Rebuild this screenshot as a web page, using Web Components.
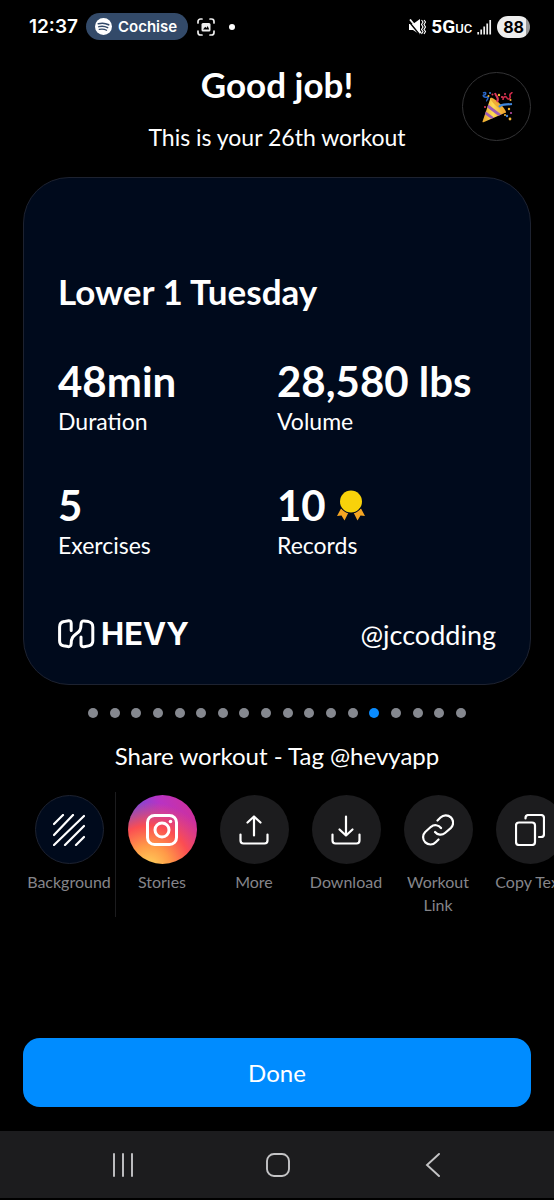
<!DOCTYPE html>
<html lang="en">
<head>
<meta charset="utf-8">
<meta name="viewport" content="width=device-width, initial-scale=1">
<title>Workout complete</title>
<style>
  html { background: #000; }
  body { margin: 0; color: #fff; font-family: Lato, "Open Sans", sans-serif; overflow-x: hidden; }
</style>
</head>
<body>
<workout-summary></workout-summary>

<script>
const define = (name, html) => {
  const template = document.createElement('template');
  template.innerHTML = html;
  customElements.define(name, class extends HTMLElement {
    constructor() {
      super();
      this.attachShadow({ mode: 'open' }).append(template.content.cloneNode(true));
    }
  });
};

define('status-bar', `
<style>
  :host { display: flex; justify-content: space-between; align-items: center; height: 53px; padding: 0 24px 0 29px; box-sizing: border-box; font-family: Inter, Roboto, sans-serif; font-weight: 600; }
  div { display: flex; align-items: center; }
  svg { display: block; flex: none; }
  .left { gap: 8px; }
  .right { gap: 5px; }
  .time { font-size: 19px; }
  .pill { display: flex; align-items: center; gap: 6px; height: 27px; padding: 0 11px 0 9px; border-radius: 14px; background: #334a69; font-size: 15px; }
  .dot { width: 6px; height: 6px; border-radius: 50%; background: #fff; margin-left: 5px; }
  .net { font: 700 19px Roboto, sans-serif; }
  small { font-size: 13px; font-weight: 500; }
  .battery { height: 22px; padding: 0 6px; border-radius: 11px; background: linear-gradient(90deg, #eee 88%, #999 88%); color: #000; font-size: 16px; font-weight: 700; line-height: 22px; }
</style>
<div class="left">
  <span class="time">12:37</span>
  <span class="pill">
    <svg width="17" height="17" viewBox="0 0 17 17"><circle cx="8.5" cy="8.5" r="8.5" fill="#fff"/><g fill="none" stroke="#334a69" stroke-linecap="round"><path d="M3.3 5.8c3.7-1.1 7.2-.7 10.4 1" stroke-width="1.6"/><path d="M3.8 8.7c3.2-.9 6.2-.5 8.9 1" stroke-width="1.4"/><path d="M4.2 11.4c2.7-.7 5.2-.4 7.4.9" stroke-width="1.2"/></g></svg>
    <span>Cochise</span>
  </span>
  <svg width="20" height="20" viewBox="0 0 20 20"><path d="M2 6V4.5A2.5 2.5 0 0 1 4.500 2H6M14 2h1.500A2.500 2.500 0 0 1 18 4.500V6M18 14v1.500a2.500 2.500 0 0 1-2.500 2.500H14M6 18H4.500A2.500 2.500 0 0 1 2 15.500V14" fill="none" stroke="#eee" stroke-width="1.700" stroke-linecap="round"/><rect x="5.500" y="6" width="9" height="8.500" rx="1.500" fill="#eee"/><path d="m7 12.500 2.200-2.700 1.300 1.300 1.200-2 1.500 3.400z" fill="#000"/></svg>
  <span class="dot"></span>
</div>
<div class="right">
  <svg width="17" height="16" viewBox="0 0 17 16"><path d="M0 5h4L11 0v15.500L4 11H0z" fill="#fff"/><path d="M-.5 2 10.500 15.500" stroke="#000" stroke-width="1.300"/><path d="m1 .500 11 13.500" stroke="#fff" stroke-width="1.800"/><path d="m12.500 1 1.500 2-1.500 2.500L14 8l-1.500 2.500 1.500 2-1.500 2.500M15 1l1.500 2L15 5.500 16.500 8 15 10.500l1.500 2L15 15" fill="none" stroke="#fff" stroke-width="1.100"/></svg>
  <span class="net">5G<small>UC</small></span>
  <svg width="15" height="16" viewBox="0 0 15 16"><path d="M1.200 13v2.500M4.200 10.500v5M7.200 7.500v8M10.200 4.500v11M13.200 1v14.500" stroke="#eee" stroke-width="1.700"/></svg>
  <span class="battery">88</span>
</div>`);

define('page-heading', `
<style>
  :host { display: grid; grid-template-columns: 69px 1fr 69px; padding: 9px 23px 0; text-align: center; }
  h1 { margin: 0; font-size: 35px; line-height: 44px; font-weight: 700; }
  p { margin: 15px 0 0; font-size: 23px; line-height: 32px; }
  .text { grid-column: 2; }
  button { width: 69px; height: 69px; margin: 10px 0 0; padding: 0; border: 1px solid #333335; border-radius: 50%; background: #000; display: grid; place-items: center; }
</style>
<div class="text"><h1><slot name="title"></slot></h1><p><slot></slot></p></div>
<button aria-label="Celebrate">
  <svg width="32" height="32" viewBox="0 0 32 32">
    <defs><linearGradient id="cone" x1="0" y1="0" x2="1" y2="0"><stop offset="0" stop-color="#e8a52c"/><stop offset=".45" stop-color="#ffdc55"/><stop offset="1" stop-color="#e79a2b"/></linearGradient></defs>
    <path d="M1.500 30.500 9.500 7c4 2 13 10 15.500 14.500L3 31c-1 .4-1.800.2-1.500-.5z" fill="url(#cone)"/>
    <path d="M9.500 7c2-2 15 9.500 15.500 14.500-1.500 1.500-17-12-15.500-14.500z" fill="#f0ad35"/>
    <path d="m7.300 13.500 13 10-3 1.300-11-8.300zM4.800 20.500l8.200 6-2.800 1.300-6.200-4.500z" fill="#9b5cb5"/>
    <path d="M18 16c3-4 7-2 13-3" fill="none" stroke="#3f86dc" stroke-width="2.200"/>
    <path d="M16 11c3-4-1-5-2-9" fill="none" stroke="#d9375b" stroke-width="2"/>
    <path d="M2 2c4-2 3 2 1 2s0 3 3 2-1 4 0 4" fill="none" stroke="#2866c8" stroke-width="1.500"/>
    <path d="M22 9c0-4 3-4 4-2s4 1 3-2 2-2 2-4" fill="none" stroke="#cc2948" stroke-width="1.600"/>
    <g fill="#e23d58"><circle cx="11.500" cy="3.500" r="1"/><circle cx="21" cy="6" r="1.100"/><circle cx="24" cy="3" r="1"/><circle cx="4" cy="16" r="1"/></g>
    <g fill="#f4b535"><circle cx="18" cy="4" r="1.200"/><circle cx="7.500" cy="5" r="1"/><circle cx="28" cy="18" r="1.200"/><circle cx="24" cy="24" r="1"/><circle cx="29" cy="28" r="1.400"/><circle cx="29.500" cy="9" r="1"/></g>
    <g fill="#4285d8"><circle cx="9" cy="2" r="1"/><circle cx="26" cy="25" r="1.200"/></g><circle cx="30" cy="22" r="1.100" fill="#b34ba3"/>
  </svg>
</button>`);

define('stat-item', `
<style>
  :host { display: block; }
  .value { display: flex; align-items: center; gap: 10px; font-size: 42px; line-height: 48px; font-weight: 700; white-space: nowrap; }
  .label { font-size: 23px; line-height: 32px; }
</style>
<div class="value"><slot></slot></div>
<div class="label"><slot name="label"></slot></div>`);

define('workout-card', `
<style>
  :host { display: flex; flex-direction: column; justify-content: flex-end; aspect-ratio: 1; box-sizing: border-box; margin: 24px 23px 0; padding: 34px; border: 1px solid #1d2230; border-radius: 46px; background: #000a1c; }
  h2 { margin: 0 0 44px; font-size: 35px; line-height: 44px; font-weight: 700; }
  .stats { display: grid; grid-template-columns: 1fr 1fr; row-gap: 44px; }
  footer { display: flex; justify-content: space-between; align-items: center; margin-top: 57px; height: 32px; font-size: 27px; }
  .brand { display: flex; align-items: center; gap: 6px; font: 700 31px/32px Inter, sans-serif; }
</style>
<h2><slot name="title"></slot></h2>
<div class="stats"><slot></slot></div>
<footer>
  <span class="brand">
    <svg width="37" height="30" viewBox="0 0 37 30"><path d="M13.200 11.500V4.500Q13.200 1.500 10.500 1.700L6 2.600Q1.600 3.300 1.600 8V22Q1.600 26 5.500 26.800L10 27.600Q13 28 13.200 24.500C13.200 19 15 17.500 18 15C21.500 12.500 23 11 23 5.500Q23.200 1.600 26 1.900L30.500 2.600Q34.800 3.600 34.800 8V22Q34.800 26 30.500 26.900L26 27.800Q23 28 23 25V18" fill="none" stroke="#fff" stroke-width="3" stroke-linecap="round" stroke-linejoin="round"/></svg>
    <span>HEVY</span>
  </span>
  <slot name="user"></slot>
</footer>`);

customElements.define('page-dots', class extends HTMLElement {
  connectedCallback() {
    const count = Number(this.getAttribute('count'));
    const active = Number(this.getAttribute('active'));
    this.attachShadow({ mode: 'open' }).innerHTML = `
<style>
  :host { display: flex; justify-content: space-between; padding: 0 88px; margin-top: 23px; }
  i { width: 10px; height: 10px; border-radius: 50%; background: #85888f; }
  .on { background: #0a8cff; }
</style>` + Array.from({ length: count }, (_, i) => `<i class="${i + 1 === active ? 'on' : ''}"></i>`).join('');
  }
});

define('share-action', `
<style>
  :host { display: block; flex: none; width: 92px; }
  button { display: flex; flex-direction: column; align-items: center; gap: 6px; width: 100%; padding: 0; border: 0; background: none; color: #85858a; font: inherit; font-size: 16px; line-height: 23px; }
  .disc { display: grid; place-items: center; width: 69px; height: 69px; box-sizing: border-box; border-radius: 50%; background: var(--disc, #1c1c1e); border: var(--ring, 0); }
  .label { max-width: 86px; }
</style>
<button><span class="disc"><slot name="icon"></slot></span><span class="label"><slot></slot></span></button>`);

define('share-row', `
<style>
  :host { display: flex; overflow: hidden; padding-left: 23px; margin-top: 20px; }
  .first { display: flex; flex: none; height: 122px; padding-top: 3px; border-right: 1px solid #1c1c1e; }
  .rest { display: flex; flex: none; padding-top: 3px; }
</style>
<div class="first"><slot name="first"></slot></div>
<div class="rest"><slot></slot></div>`);

define('nav-bar', `
<style>
  :host { display: grid; grid-template-columns: 1fr 1fr 1fr; height: 67px; padding: 0 44px 0 46px; background: #1c1c1e; border-bottom: 2px solid #000; }
  button { display: grid; place-items: center; padding: 0; border: 0; background: none; }
  path, rect { fill: none; stroke: #c4c4c6; stroke-width: 1.900; stroke-linecap: round; }
</style>
<button aria-label="Recents"><svg width="24" height="24" viewBox="0 0 24 24"><path d="M3 1v22M12 1v22M21 1v22"/></svg></button>
<button aria-label="Home"><svg width="24" height="24" viewBox="0 0 24 24"><rect x="1" y="1" width="22" height="22" rx="7"/></svg></button>
<button aria-label="Back"><svg width="24" height="24" viewBox="0 0 24 24"><path d="M18 1 6 12l12 11"/></svg></button>`);

define('workout-summary', `
<style>
  :host { display: flex; flex-direction: column; min-height: 100vh; }
  h3 { margin: 22px 0 0; text-align: center; font-size: 24px; line-height: 32px; font-weight: 400; }
  .done { margin: auto 23px 24px; height: 69px; flex: none; border: 0; border-radius: 17px; background: #008cff; color: #fff; font: inherit; font-size: 24px; }
  a { color: inherit; text-decoration: none; }
  .background { --disc: #000a1c; --ring: 1px solid #1d2230; }
  .stories { --disc: radial-gradient(circle at 30% 105%, #ffd65c 0%, #ff9a48 25%, #fb4d52 48%, transparent 75%), linear-gradient(75deg, #6252e0 15%, #b833c4 55%, #d32f94); }
  svg { display: block; }
  .line { fill: none; stroke: #fff; stroke-width: 2.200; stroke-linecap: round; stroke-linejoin: round; }
</style>
<status-bar></status-bar>
<page-heading><span slot="title">Good job!</span>This is your 26th workout</page-heading>
<workout-card>
  <span slot="title">Lower 1 Tuesday</span>
  <stat-item>48min<span slot="label">Duration</span></stat-item>
  <stat-item>28,580 lbs<span slot="label">Volume</span></stat-item>
  <stat-item>5<span slot="label">Exercises</span></stat-item>
  <stat-item><span>10</span><svg width="30" height="32" viewBox="0 0 30 32"><path d="M5 19.500 1 27l4.500-.4L8.500 31.500 12.500 23.500zM25 19.500 29 27l-4.500-.4L21.500 31.500 17.500 23.500z" fill="#f5a623"/><circle cx="15" cy="12.500" r="12" fill="#000a1c"/><circle cx="15" cy="12.500" r="11" fill="#f8d20a"/></svg><span slot="label">Records</span></stat-item>
  <a slot="user" href="#profile">@jccodding</a>
</workout-card>
<page-dots count="18" active="14"></page-dots>
<h3>Share workout - Tag @hevyapp</h3>
<share-row>
  <share-action slot="first" class="background"><svg slot="icon" class="line" width="32" height="32" viewBox="0 0 32 32"><path d="m1 10 9-9M1 21 20 1M1 31 31 2M12 31l19-19M23 31l8-8"/></svg>Background</share-action>
  <share-action class="stories"><svg slot="icon" class="line" width="32" height="32" viewBox="0 0 32 32" style="stroke-width:3"><rect x="1.500" y="1.500" width="29" height="29" rx="7"/><circle cx="16" cy="16" r="7"/><circle cx="24.500" cy="7.500" r="1.800" fill="#fff" stroke="none"/></svg>Stories</share-action>
  <share-action><svg slot="icon" class="line" width="30" height="30" viewBox="0 0 30 30"><path d="M1.500 19.500v6q0 3 3 3h21q3 0 3-3v-6M15 20.500V1.500M8.500 7.500 15 1.500l6.500 6"/></svg>More</share-action>
  <share-action><svg slot="icon" class="line" width="30" height="30" viewBox="0 0 30 30"><path d="M1.500 19.500v6q0 3 3 3h21q3 0 3-3v-6M15 1.500v19M8.500 14.500l6.500 6 6.500-6"/></svg>Download</share-action>
  <share-action><svg slot="icon" class="line" width="32" height="32" viewBox="0 0 32 32"><path d="M15.500 6.500 18.500 3.500A7.200 7.200 0 0 1 29 13.800L23 19a7 7 0 0 1-10-1M16.500 25.500l-2.800 2.800A7.200 7.200 0 0 1 3.200 18L9 12.800a7 7 0 0 1 10 1.200"/></svg>Workout Link</share-action>
  <share-action><svg slot="icon" class="line" width="30" height="32" viewBox="0 0 30 32"><rect x="1" y="8.500" width="19" height="22.500" rx="3"/><path d="M10.500 4.500V4q0-3 3-3H26q3 0 3 3v16q0 3-3 3h-2"/></svg>Copy Text</share-action>
</share-row>
<button class="done">Done</button>
<nav-bar></nav-bar>`);
</script>
</body>
</html>
